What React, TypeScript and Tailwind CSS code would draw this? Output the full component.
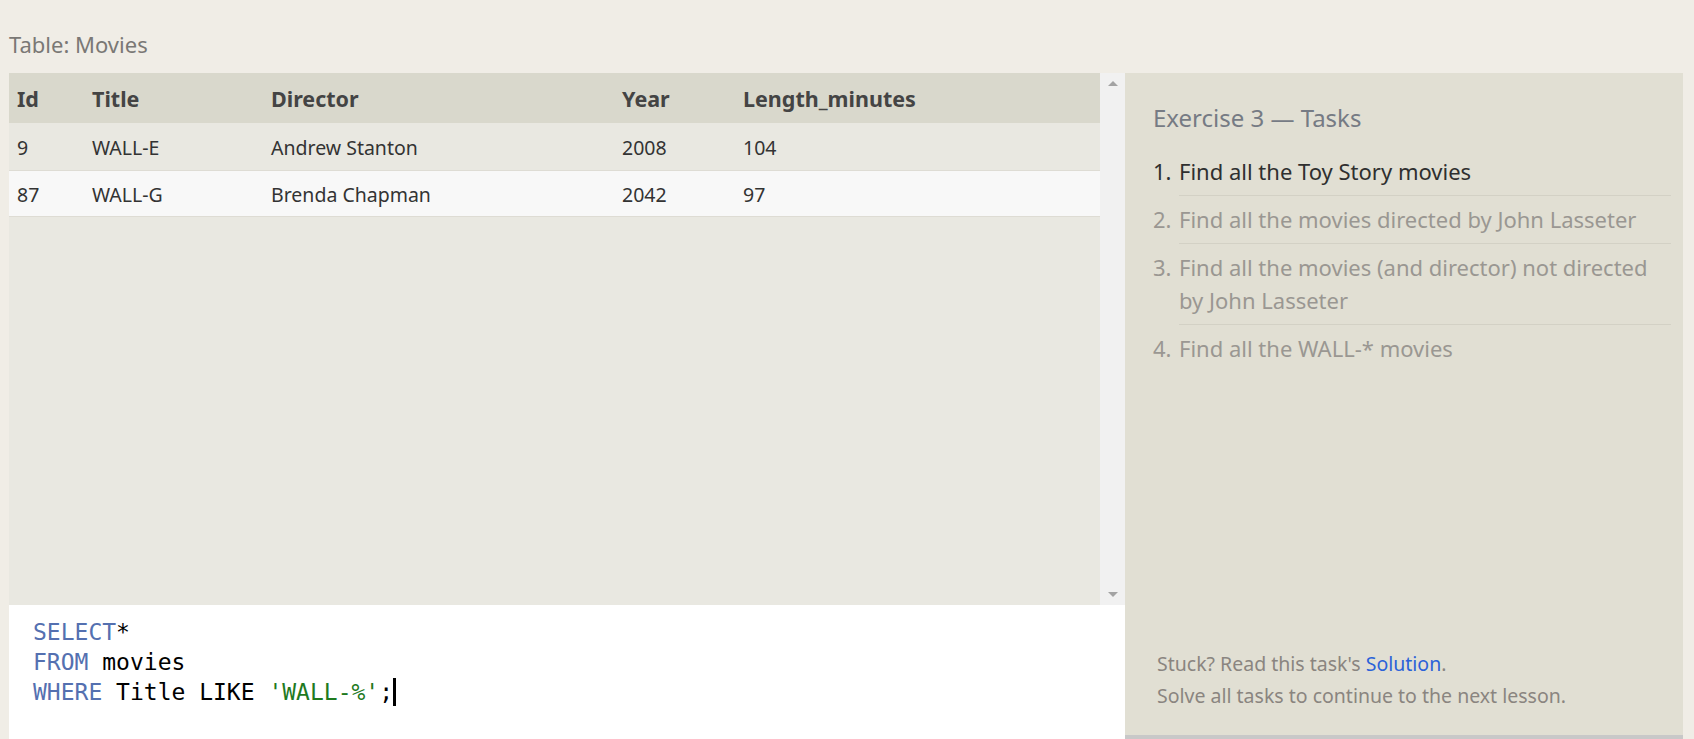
const columns = [
    { key: 'id', label: 'Id', width: 'w-[75px]' },
    { key: 'title', label: 'Title', width: 'w-[179px]' },
    { key: 'director', label: 'Director', width: 'w-[351px]' },
    { key: 'year', label: 'Year', width: 'w-[121px]' },
    { key: 'length', label: 'Length_minutes', width: 'flex-1' }
];

const rows = [
    { id: '9', title: 'WALL-E', director: 'Andrew Stanton', year: '2008', length: '104' },
    { id: '87', title: 'WALL-G', director: 'Brenda Chapman', year: '2042', length: '97' }
];

const tasks = [
    { n: '1.', text: 'Find all the Toy Story movies', active: true },
    { n: '2.', text: 'Find all the movies directed by John Lasseter', active: false },
    { n: '3.', text: 'Find all the movies (and director) not directed\nby John Lasseter', active: false },
    { n: '4.', text: 'Find all the WALL-* movies', active: false, last: true }
];

const sans = "font-['Noto_Sans','Open_Sans',sans-serif]";

export default function App() {
    return (
        <div className={`h-[739px] overflow-hidden bg-[#f0ede6] pl-[9px] pr-[11px] ${sans}`}>
            <div className="h-[73px] flex items-end pb-[18px]">
                <span className="text-[22px] text-[#7a7875] leading-none">Table: Movies</span>
            </div>

            <div className="flex">
                {/* left: results + editor */}
                <div className="w-[1116px] flex flex-col">
                    <div className="h-[532px] flex bg-[#e9e8e1]">
                        <div className="flex-1">
                            <div className="flex h-[50px] items-center pt-[3px] bg-[#d9d8cc] text-[21.5px] font-bold text-[#444]">
                                {columns.map((c) => (
                                    <div key={c.key} className={`${c.width} pl-[8px]`}>{c.label}</div>
                                ))}
                            </div>
                            {rows.map((r, i) => (
                                <div
                                    key={r.id}
                                    className={`flex items-center pt-[2px] text-[19.5px] text-[#333] border-b border-[#dedcd4] ${i === 0 ? 'h-[48px] bg-[#e9e8e1]' : 'h-[46px] bg-[#f8f8f8]'}`}
                                >
                                    {columns.map((c) => (
                                        <div key={c.key} className={`${c.width} pl-[8px]`}>
                                            {r[c.key as keyof typeof r]}
                                        </div>
                                    ))}
                                </div>
                            ))}
                        </div>
                        {/* scrollbar */}
                        <div className="w-[25px] bg-[#f1f1f1] flex flex-col justify-between items-center py-[8px]">
                            <div className="w-0 h-0 border-l-[5px] border-r-[5px] border-b-[5px] border-l-transparent border-r-transparent border-b-[#a3a3a3]" />
                            <div className="w-0 h-0 border-l-[5px] border-r-[5px] border-t-[5px] border-l-transparent border-r-transparent border-t-[#a3a3a3]" />
                        </div>
                    </div>

                    <div className="h-[140px] bg-white pl-[24px] pt-[12px] font-['DejaVu_Sans_Mono',monospace] text-[23px] leading-[30px] text-black">
                        <div><span className="text-[#5470b0]">SELECT</span>*</div>
                        <div><span className="text-[#5470b0]">FROM</span> movies</div>
                        <div className="flex items-center">
                            <span className="text-[#5470b0]">WHERE</span>
                            <span className="whitespace-pre"> Title LIKE </span>
                            <span className="text-[#1f7a1f]">'WALL-%'</span>
                            <span>;</span>
                            <span className="inline-block w-[3px] h-[28px] bg-black" />
                        </div>
                    </div>
                </div>

                {/* right: tasks */}
                <div className="w-[558px] h-[666px] bg-[#e1dfd3] border-b-4 border-[#c8c8c8] flex flex-col pl-[28px] pr-[12px]">
                    <div className="pt-[30px] text-[24px] leading-[30px] text-[#767b84]">Exercise 3 — Tasks</div>
                    <ol className="mt-[15px] text-[22px] leading-[33px]">
                        {tasks.map((t) => (
                            <li key={t.n} className={`flex ${t.active ? 'text-[#2f2f2f]' : 'text-[#9a9792]'}`}>
                                <span className="w-[26px] shrink-0 py-[7px]">{t.n}</span>
                                <div className={`flex-1 py-[7px] whitespace-pre-line ${t.last ? '' : 'border-b border-[#d3d1c5]'}`}>
                                    {t.text}
                                </div>
                            </li>
                        ))}
                    </ol>
                    <div className="mt-auto pb-[23px] pl-[4px] text-[19.5px] leading-[32px] text-[#8a8580]">
                        <div>
                            Stuck? Read this task's <span className="text-[#2b62d9]">Solution</span>.
                        </div>
                        <div>Solve all tasks to continue to the next lesson.</div>
                    </div>
                </div>
            </div>
        </div>
    );
}
